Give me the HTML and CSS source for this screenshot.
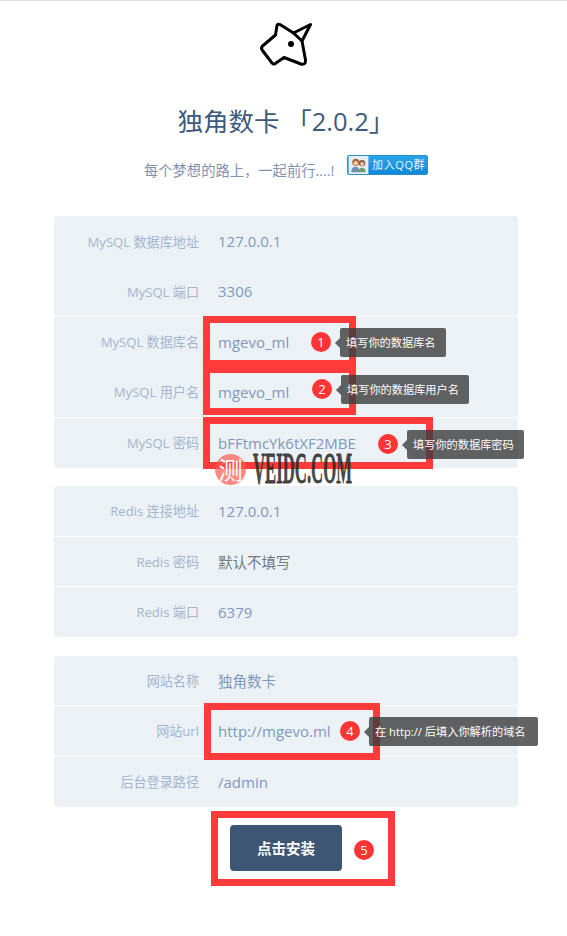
FILE: index.html
```html
<!DOCTYPE html>
<html lang="en">
<head>
    <meta charset="UTF-8">
    <meta name="viewport" content="width=device-width, initial-scale=1.0">
    <title>独角数卡 安装</title>
    <link rel="stylesheet" href="styles.css">
</head>
<body>
    <div class="page">
        <header class="header">
            <svg class="logo" viewBox="256 20 60 50" width="60" height="50">
                <path d="M277 25.500 Q278 23.500 280 24.500 L293.500 33 L310.500 24.500 L302 41 L305.500 60 Q306 65 301 64 L284 57.500 L276 63 Q274 65 272 63 L262.500 50.500 Q260.500 48 262.500 46 L275.500 35 Z" fill="none" stroke="#000" stroke-width="3" stroke-linejoin="round"/>
                <path d="M293.500 33 L302 41" fill="none" stroke="#000" stroke-width="3" stroke-linecap="round"/>
                <circle cx="291" cy="44" r="3" fill="#000"/>
            </svg>
            <h1 class="title">独角数卡 「2.0.2」</h1>
            <p class="subtitle">
                每个梦想的路上，一起前行....!
                <span class="qq-btn">
                    <svg class="qq-avatar" viewBox="0 0 22 20" width="22" height="20">
                        <rect width="22" height="20" fill="#e8eef2"/>
                        <circle cx="8" cy="7" r="4" fill="#a5673f"/>
                        <circle cx="15" cy="8" r="3.500" fill="#8a5a3a"/>
                        <circle cx="8" cy="8" r="2.500" fill="#f1c9a5"/>
                        <circle cx="15" cy="9" r="2.200" fill="#f1c9a5"/>
                        <path d="M3 18 Q3 12 8 12 Q12 12 12 18 Z" fill="#6d8fb0"/>
                        <path d="M11 18 Q11 13 15 13 Q19 13 19 18 Z" fill="#6fa06f"/>
                    </svg>
                    <span class="qq-text">加入QQ群</span>
                </span>
            </p>
        </header>

        <section class="group">
            <div class="row no-line"><label>MySQL 数据库地址</label><span>127.0.0.1</span></div>
            <div class="row"><label>MySQL 端口</label><span>3306</span></div>
            <div class="row no-line"><label>MySQL 数据库名</label><span>mgevo_ml</span></div>
            <div class="row"><label>MySQL 用户名</label><span>mgevo_ml</span></div>
            <div class="row"><label>MySQL 密码</label><span>bFFtmcYk6tXF2MBE</span></div>
        </section>

        <section class="group">
            <div class="row"><label>Redis 连接地址</label><span>127.0.0.1</span></div>
            <div class="row"><label>Redis 密码</label><span class="cjk placeholder">默认不填写</span></div>
            <div class="row"><label>Redis 端口</label><span>6379</span></div>
        </section>

        <section class="group">
            <div class="row"><label>网站名称</label><span class="cjk">独角数卡</span></div>
            <div class="row"><label>网站url</label><span>http://mgevo.ml</span></div>
            <div class="row"><label>后台登录路径</label><span>/admin</span></div>
        </section>

        <div class="actions">
            <button class="install-btn">点击安装</button>
        </div>

        <!-- annotations drawn over the screenshot -->
        <div class="frame frame-1"></div>
        <div class="frame frame-2"></div>
        <div class="frame frame-3"></div>
        <div class="frame frame-4"></div>
        <div class="frame frame-5"></div>

        <div class="badge badge-1">1</div>
        <div class="badge badge-2">2</div>
        <div class="badge badge-3">3</div>
        <div class="badge badge-4">4</div>
        <div class="badge badge-5">5</div>

        <div class="tip tip-1">填写你的数据库名</div>
        <div class="tip tip-2">填写你的数据库用户名</div>
        <div class="tip tip-3">填写你的数据库密码</div>
        <div class="tip tip-4">在 http:// 后填入你解析的域名</div>

        <div class="watermark">
            <span class="wm-circle">测</span>
            <span class="wm-text">VEIDC.COM</span>
        </div>
    </div>
</body>
</html>
```

FILE: styles.css
```css
* {
    box-sizing: border-box;
}
html, body {
    margin: 0;
    padding: 0;
}
body {
    font-family: "Open Sans", "Noto Sans CJK SC", sans-serif;
    font-size: 15px;
    color: #7f98bd;
    background: #fff;
    border-top: 1px solid #ddd;
}
.page {
    position: relative;
    width: 567px;
    height: 935px;
    padding: 0 49px 0 54px;
    overflow: hidden;
}
.header {
    text-align: center;
    padding-top: 19px;
    height: 215px;
}
.logo {
    display: block;
    margin: 0 auto;
}
.title {
    margin: 33px 0 0;
    font-size: 25.5px;
    line-height: 36px;
    font-weight: 400;
    color: #3e5a7a;
}
.subtitle {
    margin: 16px 0 0;
    line-height: 24px;
    font-size: 14.3px;
    color: #8093b2;
}
.qq-btn {
    display: inline-flex;
    align-items: center;
    width: 81px;
    height: 20px;
    margin-left: 9px;
    vertical-align: 2px;
    background: linear-gradient(#2aa4e8, #1187d6);
    border: 1px solid #2b8fd0;
    border-radius: 2px;
    overflow: hidden;
}
.qq-avatar {
    flex: none;
    width: 21px;
    height: 18px;
}
.qq-text {
    margin-left: 3px;
    font-size: 11px;
    line-height: 18px;
    letter-spacing: 0.6px;
    color: #e8f5ff;
}
.group {
    background: #ecf1f6;
    border-radius: 4px;
    margin-bottom: 18.8px;
    overflow: hidden;
}
.group:first-of-type {
    margin-bottom: 18.3px;
}
.group:first-of-type .row {
    height: 50.4px;
}
.group:last-of-type {
    margin-bottom: 18px;
}
.row {
    display: grid;
    grid-template-columns: 145px 1fr;
    column-gap: 19px;
    align-items: center;
    height: 50.3px;
    border-bottom: 1px solid #fff;
}
.row:last-child {
    border-bottom: none;
}
.row.no-line {
    border-bottom: none;
}
.row label {
    text-align: right;
    font-size: 13.1px;
    color: #a3b5cf;
}
.cjk {
    font-size: 14.5px;
}
.placeholder {
    color: #6f7d80;
}
.actions {
    display: flex;
    justify-content: center;
}
.install-btn {
    width: 112px;
    height: 46px;
    border: none;
    border-radius: 4px;
    background: #3d5674;
    color: #fff;
    font-family: inherit;
    font-size: 14.5px;
    font-weight: 700;
}
.frame {
    position: absolute;
    border: 7px solid #ff3a3a;
}
.frame-1 { left: 203px; top: 315px; width: 153px; height: 51px; }
.frame-2 { left: 203px; top: 365px; width: 153px; height: 49px; }
.frame-3 { left: 203px; top: 416px; width: 230px; height: 52px; }
.frame-4 { left: 204px; top: 702px; width: 176px; height: 57px; }
.frame-5 { left: 211px; top: 810px; width: 184px; height: 75px; }
.badge {
    position: absolute;
    width: 20px;
    height: 20px;
    border-radius: 50%;
    background: #ff3434;
    color: #fff;
    font-size: 13px;
    line-height: 20px;
    text-align: center;
}
.badge-1 { left: 311px; top: 331px; }
.badge-2 { left: 312px; top: 378px; }
.badge-3 { left: 378px; top: 433px; }
.badge-4 { left: 340px; top: 720px; }
.badge-5 { left: 354px; top: 839px; }
.tip {
    position: absolute;
    height: 29px;
    padding-left: 6px;
    border-radius: 2px;
    background: rgba(60, 60, 60, 0.8);
    color: #fff;
    font-size: 11.2px;
    line-height: 29px;
    white-space: nowrap;
}
.tip::before {
    content: "";
    position: absolute;
    left: -5px;
    top: 10px;
    border-style: solid;
    border-width: 5px 5px 5px 0;
    border-color: transparent rgba(60, 60, 60, 0.8) transparent transparent;
}
.tip-1 { left: 340px; top: 327px; width: 106px; }
.tip-2 { left: 341px; top: 374px; width: 128px; }
.tip-3 { left: 407px; top: 429px; width: 117px; }
.tip-4 { left: 369px; top: 716px; width: 169px; }
.watermark {
    position: absolute;
    left: 215px;
    top: 452px;
    display: flex;
    align-items: center;
    gap: 7px;
}
.wm-circle {
    width: 31px;
    height: 31px;
    border-radius: 50%;
    background: rgba(255, 90, 80, 0.7);
    color: #fff;
    font-size: 24px;
    line-height: 31px;
    text-align: center;
}
.wm-text {
    display: block;
    width: 100px;
    font-family: "Liberation Serif", serif;
    font-size: 44px;
    font-weight: 700;
    line-height: 32px;
    color: rgba(40, 40, 40, 0.85);
    white-space: nowrap;
    transform: scaleX(0.38);
    transform-origin: left center;
    -webkit-text-stroke: 0.8px rgba(40, 40, 40, 0.85);
}
```
